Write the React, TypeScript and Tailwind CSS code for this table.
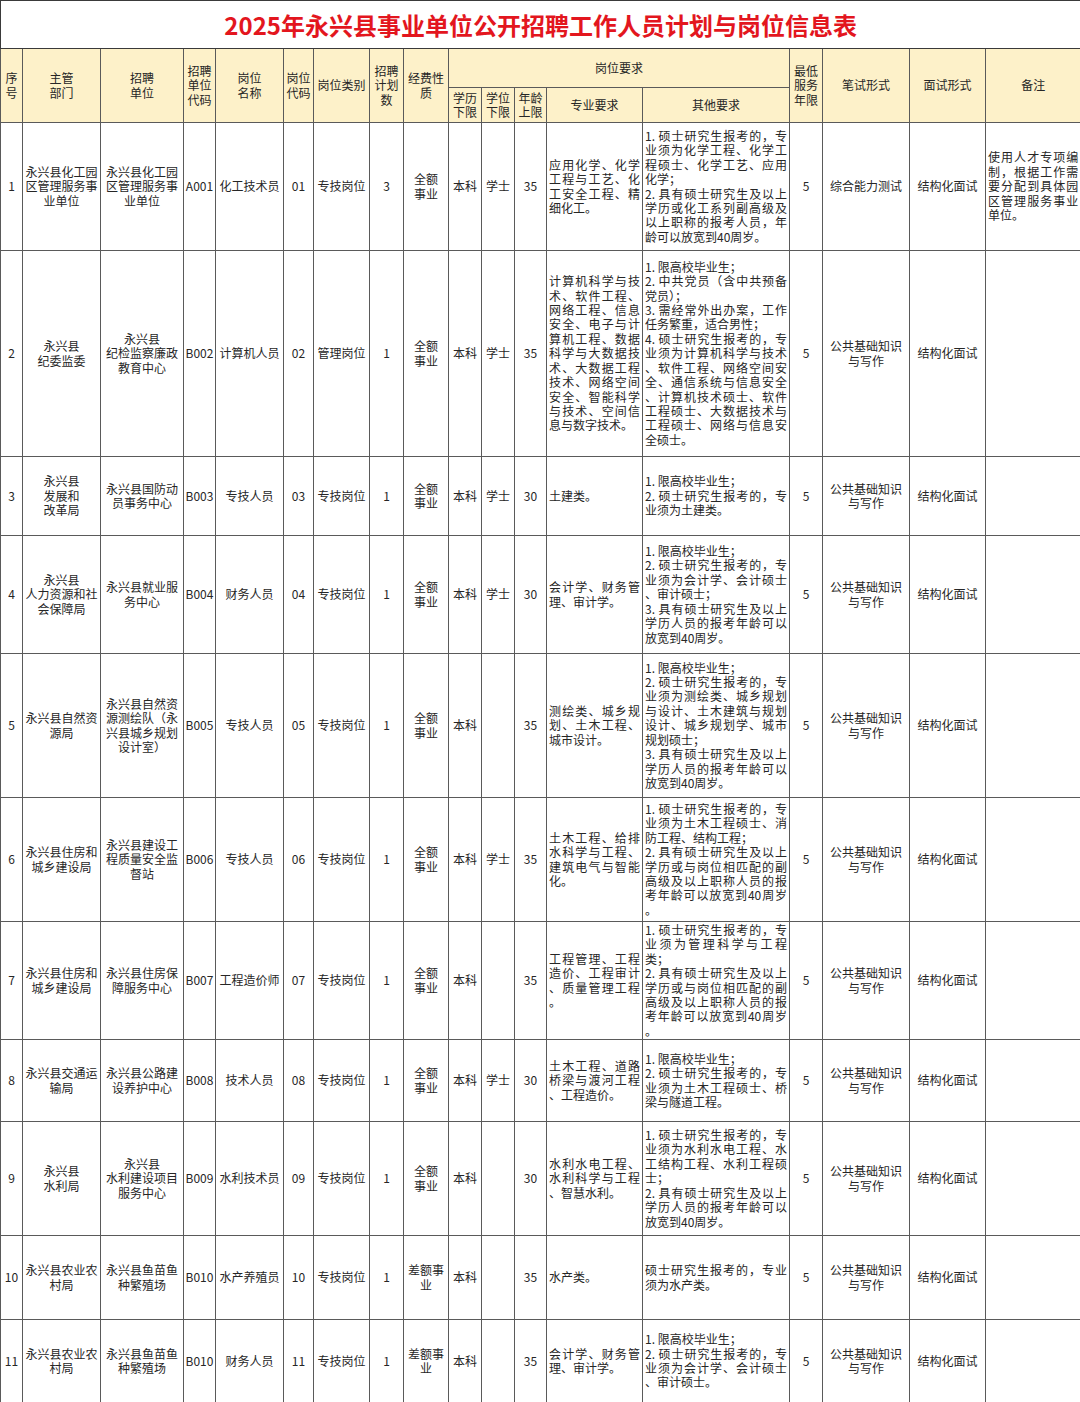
import React from 'react';

interface JobRow {
  no: string;
  dept: string[];
  unit: string[];
  code: string;
  name: string;
  pcode: string;
  cat: string;
  num: string;
  fund: string[];
  edu: string;
  deg: string;
  age: string;
  major: string[];
  other: string[][];
  years: string;
  written: string[];
  interview: string;
  remark?: string[];
  h: string;
}

const WRITTEN = ['公共基础知识', '与写作'];
const AGE40 = ['3. 具有硕士研究生及以上', '学历人员的报考年龄可以', '放宽到40周岁。'];

const rows: JobRow[] = [
  {
    no: '1', dept: ['永兴县化工园', '区管理服务事', '业单位'], unit: ['永兴县化工园', '区管理服务事', '业单位'],
    code: 'A001', name: '化工技术员', pcode: '01', cat: '专技岗位', num: '3', fund: ['全额', '事业'],
    edu: '本科', deg: '学士', age: '35',
    major: ['应用化学、化学', '工程与工艺、化', '工安全工程、精', '细化工。'],
    other: [
      ['1. 硕士研究生报考的，专', '业须为化学工程、化学工', '程硕士、化学工艺、应用', '化学；'],
      ['2. 具有硕士研究生及以上', '学历或化工系列副高级及', '以上职称的报考人员，年', '龄可以放宽到40周岁。'],
    ],
    years: '5', written: ['综合能力测试'], interview: '结构化面试',
    remark: ['使用人才专项编', '制，根据工作需', '要分配到具体园', '区管理服务事业', '单位。'],
    h: 'h-[128px]',
  },
  {
    no: '2', dept: ['永兴县', '纪委监委'], unit: ['永兴县', '纪检监察廉政', '教育中心'],
    code: 'B002', name: '计算机人员', pcode: '02', cat: '管理岗位', num: '1', fund: ['全额', '事业'],
    edu: '本科', deg: '学士', age: '35',
    major: ['计算机科学与技', '术、软件工程、', '网络工程、信息', '安全、电子与计', '算机工程、数据', '科学与大数据技', '术、大数据工程', '技术、网络空间', '安全、智能科学', '与技术、空间信', '息与数字技术。'],
    other: [
      ['1. 限高校毕业生；'],
      ['2. 中共党员（含中共预备', '党员）；'],
      ['3. 需经常外出办案，工作', '任务繁重，适合男性；'],
      ['4. 硕士研究生报考的，专', '业须为计算机科学与技术', '、软件工程、网络空间安', '全、通信系统与信息安全', '、计算机技术硕士、软件', '工程硕士、大数据技术与', '工程硕士、网络与信息安', '全硕士。'],
    ],
    years: '5', written: WRITTEN, interview: '结构化面试', h: 'h-[206px]',
  },
  {
    no: '3', dept: ['永兴县', '发展和', '改革局'], unit: ['永兴县国防动', '员事务中心'],
    code: 'B003', name: '专技人员', pcode: '03', cat: '专技岗位', num: '1', fund: ['全额', '事业'],
    edu: '本科', deg: '学士', age: '30',
    major: ['土建类。'],
    other: [['1. 限高校毕业生；'], ['2. 硕士研究生报考的，专', '业须为土建类。']],
    years: '5', written: WRITTEN, interview: '结构化面试', h: 'h-[79px]',
  },
  {
    no: '4', dept: ['永兴县', '人力资源和社', '会保障局'], unit: ['永兴县就业服', '务中心'],
    code: 'B004', name: '财务人员', pcode: '04', cat: '专技岗位', num: '1', fund: ['全额', '事业'],
    edu: '本科', deg: '学士', age: '30',
    major: ['会计学、财务管', '理、审计学。'],
    other: [['1. 限高校毕业生；'], ['2. 硕士研究生报考的，专', '业须为会计学、会计硕士', '、审计硕士；'], AGE40],
    years: '5', written: WRITTEN, interview: '结构化面试', h: 'h-[118px]',
  },
  {
    no: '5', dept: ['永兴县自然资', '源局'], unit: ['永兴县自然资', '源测绘队（永', '兴县城乡规划', '设计室）'],
    code: 'B005', name: '专技人员', pcode: '05', cat: '专技岗位', num: '1', fund: ['全额', '事业'],
    edu: '本科', deg: '', age: '35',
    major: ['测绘类、城乡规', '划、土木工程、', '城市设计。'],
    other: [
      ['1. 限高校毕业生；'],
      ['2. 硕士研究生报考的，专', '业须为测绘类、城乡规划', '与设计、土木建筑与规划', '设计、城乡规划学、城市', '规划硕士；'],
      AGE40,
    ],
    years: '5', written: WRITTEN, interview: '结构化面试', h: 'h-[144px]',
  },
  {
    no: '6', dept: ['永兴县住房和', '城乡建设局'], unit: ['永兴县建设工', '程质量安全监', '督站'],
    code: 'B006', name: '专技人员', pcode: '06', cat: '专技岗位', num: '1', fund: ['全额', '事业'],
    edu: '本科', deg: '学士', age: '35',
    major: ['土木工程、给排', '水科学与工程、', '建筑电气与智能', '化。'],
    other: [
      ['1. 硕士研究生报考的，专', '业须为土木工程硕士、消', '防工程、结构工程；'],
      ['2. 具有硕士研究生及以上', '学历或与岗位相匹配的副', '高级及以上职称人员的报', '考年龄可以放宽到40周岁', '。'],
    ],
    years: '5', written: WRITTEN, interview: '结构化面试', h: 'h-[124px]',
  },
  {
    no: '7', dept: ['永兴县住房和', '城乡建设局'], unit: ['永兴县住房保', '障服务中心'],
    code: 'B007', name: '工程造价师', pcode: '07', cat: '专技岗位', num: '1', fund: ['全额', '事业'],
    edu: '本科', deg: '', age: '35',
    major: ['工程管理、工程', '造价、工程审计', '、质量管理工程', '。'],
    other: [
      ['1. 硕士研究生报考的，专', '业须为管理科学与工程', '类；'],
      ['2. 具有硕士研究生及以上', '学历或与岗位相匹配的副', '高级及以上职称人员的报', '考年龄可以放宽到40周岁', '。'],
    ],
    years: '5', written: WRITTEN, interview: '结构化面试', h: 'h-[118px]',
  },
  {
    no: '8', dept: ['永兴县交通运', '输局'], unit: ['永兴县公路建', '设养护中心'],
    code: 'B008', name: '技术人员', pcode: '08', cat: '专技岗位', num: '1', fund: ['全额', '事业'],
    edu: '本科', deg: '学士', age: '30',
    major: ['土木工程、道路', '桥梁与渡河工程', '、工程造价。'],
    other: [['1. 限高校毕业生；'], ['2. 硕士研究生报考的，专', '业须为土木工程硕士、桥', '梁与隧道工程。']],
    years: '5', written: WRITTEN, interview: '结构化面试', h: 'h-[82px]',
  },
  {
    no: '9', dept: ['永兴县', '水利局'], unit: ['永兴县', '水利建设项目', '服务中心'],
    code: 'B009', name: '水利技术员', pcode: '09', cat: '专技岗位', num: '1', fund: ['全额', '事业'],
    edu: '本科', deg: '', age: '30',
    major: ['水利水电工程、', '水利科学与工程', '、智慧水利。'],
    other: [
      ['1. 硕士研究生报考的，专', '业须为水利水电工程、水', '工结构工程、水利工程硕', '士；'],
      ['2. 具有硕士研究生及以上', '学历人员的报考年龄可以', '放宽到40周岁。'],
    ],
    years: '5', written: WRITTEN, interview: '结构化面试', h: 'h-[114px]',
  },
  {
    no: '10', dept: ['永兴县农业农', '村局'], unit: ['永兴县鱼苗鱼', '种繁殖场'],
    code: 'B010', name: '水产养殖员', pcode: '10', cat: '专技岗位', num: '1', fund: ['差额事', '业'],
    edu: '本科', deg: '', age: '35',
    major: ['水产类。'],
    other: [['硕士研究生报考的，专业', '须为水产类。']],
    years: '5', written: WRITTEN, interview: '结构化面试', h: 'h-[84px]',
  },
  {
    no: '11', dept: ['永兴县农业农', '村局'], unit: ['永兴县鱼苗鱼', '种繁殖场'],
    code: 'B010', name: '财务人员', pcode: '11', cat: '专技岗位', num: '1', fund: ['差额事', '业'],
    edu: '本科', deg: '', age: '35',
    major: ['会计学、财务管', '理、审计学。'],
    other: [['1. 限高校毕业生；'], ['2. 硕士研究生报考的，专', '业须为会计学、会计硕士', '、审计硕士。']],
    years: '5', written: WRITTEN, interview: '结构化面试', h: 'h-[83px]',
  },
];

const cell = 'border border-[#5a5a5a] align-middle p-0';

// lines of one paragraph: every line but the last is spread to full width
function Para({ lines }: { lines: string[] }) {
  return (
    <>
      {lines.map((l, i) => (
        <div
          key={i}
          className={i < lines.length - 1 ? 'text-justify [text-align-last:justify]' : 'text-left'}
        >
          {l}
        </div>
      ))}
    </>
  );
}

function Center({ lines }: { lines: string[] }) {
  return (
    <td className={`${cell} text-center px-[1px]`}>
      {lines.map((l, i) => (
        <div key={i}>{l}</div>
      ))}
    </td>
  );
}

function Head({ lines, rowSpan, colSpan }: { lines: string[]; rowSpan?: number; colSpan?: number }) {
  return (
    <th rowSpan={rowSpan} colSpan={colSpan} className={`${cell} bg-[#fdf1c9] font-normal text-center px-[1px]`}>
      {lines.map((l, i) => (
        <div key={i}>{l}</div>
      ))}
    </th>
  );
}

const widths = [
  'w-[22px]', 'w-[78px]', 'w-[83px]', 'w-[32px]', 'w-[68px]', 'w-[30px]', 'w-[56px]', 'w-[34px]', 'w-[45px]',
  'w-[33px]', 'w-[33px]', 'w-[32px]', 'w-[96px]', 'w-[147px]', 'w-[33px]', 'w-[87px]', 'w-[76px]', 'w-[95px]',
];

export default function App() {
  return (
    <div className="w-[1080px] h-[1402px] overflow-hidden bg-white font-['Noto_Sans_CJK_SC',sans-serif] text-[12px] leading-[14.4px] text-[#262626]">
      <table className="table-fixed border-collapse w-[1080px] border border-[#3a3a3a]">
        <colgroup>
          {widths.map((w, i) => (
            <col key={i} className={w} />
          ))}
        </colgroup>
        <thead>
          <tr className="h-[48px]">
            <th colSpan={18} className="border border-[#3a3a3a] bg-white text-center font-semibold text-[24px] leading-[30px] text-[#e3161e]">
              2025年永兴县事业单位公开招聘工作人员计划与岗位信息表
            </th>
          </tr>
          <tr className="h-[39px]">
            <Head rowSpan={2} lines={['序', '号']} />
            <Head rowSpan={2} lines={['主管', '部门']} />
            <Head rowSpan={2} lines={['招聘', '单位']} />
            <Head rowSpan={2} lines={['招聘', '单位', '代码']} />
            <Head rowSpan={2} lines={['岗位', '名称']} />
            <Head rowSpan={2} lines={['岗位', '代码']} />
            <Head rowSpan={2} lines={['岗位类别']} />
            <Head rowSpan={2} lines={['招聘', '计划', '数']} />
            <Head rowSpan={2} lines={['经费性', '质']} />
            <Head colSpan={5} lines={['岗位要求']} />
            <Head rowSpan={2} lines={['最低', '服务', '年限']} />
            <Head rowSpan={2} lines={['笔试形式']} />
            <Head rowSpan={2} lines={['面试形式']} />
            <Head rowSpan={2} lines={['备注']} />
          </tr>
          <tr className="h-[35px]">
            <Head lines={['学历', '下限']} />
            <Head lines={['学位', '下限']} />
            <Head lines={['年龄', '上限']} />
            <Head lines={['专业要求']} />
            <Head lines={['其他要求']} />
          </tr>
        </thead>
        <tbody>
          {rows.map((r) => (
            <tr key={r.no} className={r.h}>
              <Center lines={[r.no]} />
              <Center lines={r.dept} />
              <Center lines={r.unit} />
              <Center lines={[r.code]} />
              <Center lines={[r.name]} />
              <Center lines={[r.pcode]} />
              <Center lines={[r.cat]} />
              <Center lines={[r.num]} />
              <Center lines={r.fund} />
              <Center lines={[r.edu]} />
              <Center lines={r.deg ? [r.deg] : []} />
              <Center lines={[r.age]} />
              <td className={`${cell} px-[2px]`}>
                <Para lines={r.major} />
              </td>
              <td className={`${cell} px-[2px]`}>
                {r.other.map((p, i) => (
                  <Para key={i} lines={p} />
                ))}
              </td>
              <Center lines={[r.years]} />
              <Center lines={r.written} />
              <Center lines={[r.interview]} />
              <td className={`${cell} px-[2px]`}>{r.remark && <Para lines={r.remark} />}</td>
            </tr>
          ))}
        </tbody>
      </table>
    </div>
  );
}
